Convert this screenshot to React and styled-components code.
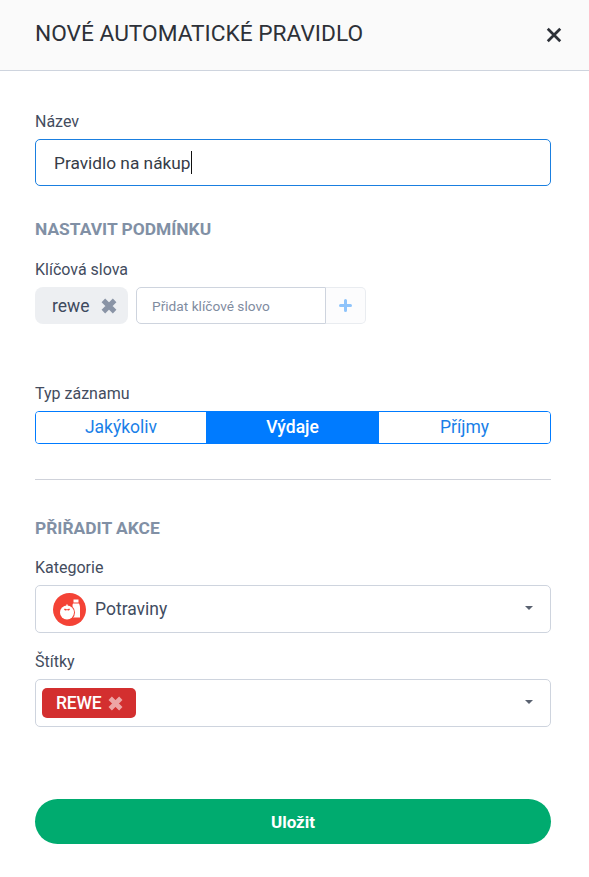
import React from "react";
import styled, { createGlobalStyle } from "styled-components";

const Global = createGlobalStyle`
  html, body { margin: 0; padding: 0; background: #fff; }
  body { font-family: Roboto, "Liberation Sans", sans-serif; color: #3e4a5e; }
  * { box-sizing: border-box; }
`;
const Modal = styled.div`width: 589px; height: 877px; background: #fff; overflow: hidden;`;
const Header = styled.header`
  height: 71px; background: #fafafa; border-bottom: 1px solid #ced4de;
  display: flex; align-items: center; justify-content: space-between;
  padding: 0 26px 2px 35px;
`;
const Title = styled.h1`margin: 0; font-size: 22.7px; font-weight: 400; color: #2d3138; line-height: 28px;`;
const Close = styled.span`display: flex; width: 20px; height: 20px; margin-top: 2px; margin-right: -1px;`;
const Body = styled.div`padding: 40px 38px 0 35px; display: flex; flex-direction: column;`;
const Label = styled.label`display: block; font-size: 16px; height: 20px; line-height: 22px; color: #434c5e;`;
const NameField = styled.div`
  height: 47px; margin-top: 8px; border: 1px solid #1a7fe0; border-radius: 5px;
  display: flex; align-items: center; padding: 0 0 0 18px; font-size: 17.3px; color: #363c47;
`;
const Caret = styled.i`display: inline-block; width: 1px; height: 23px; background: #111;`;
const Section = styled.h2`
  margin: ${p => p.$top}px 0 ${p => p.$bottom}px; font-size: 17.4px; line-height: 22px; font-weight: 700; color: #8190a5;
`;
const KeywordRow = styled.div`display: flex; margin-top: 8px; height: 37px;`;
const Keyword = styled.div`
  width: 93px; background: #edeff2; border-radius: 8px; display: flex; align-items: center;
  padding-left: 17px; font-size: 17.5px; color: #3e4a5e; gap: 11px;
`;
const KeywordInput = styled.div`
  margin-left: 8px; width: 190px; border: 1px solid #ced4de; border-radius: 5px 0 0 5px;
  display: flex; align-items: center; padding-left: 15px; font-size: 13.7px; color: #7f8c9f;
`;
const AddButton = styled.div`
  width: 40px; border: 1px solid #e9ecf0; border-left: none; border-radius: 0 5px 5px 0; background: #fcfcfd;
  display: flex; align-items: center; justify-content: center;
`;
const TypeLabel = styled(Label)`margin-top: 59px;`;
const Segmented = styled.div`
  margin-top: 8px; height: 33px; border: 1px solid #007bff; border-radius: 4px; overflow: hidden;
  display: grid; grid-template-columns: 170px 173px 1fr;
`;
const Segment = styled.div`
  display: flex; align-items: center; justify-content: center; font-size: 17.5px; padding-bottom: 1px;
  background: ${p => (p.$active ? "#007bff" : "#fff")};
  color: ${p => (p.$active ? "#fff" : "#1a7fe8")};
  font-weight: ${p => (p.$active ? 500 : 400)};
`;
const Divider = styled.hr`margin: 35px 0 0; border: 0; border-top: 1px solid #cfd2da;`;
const Select = styled.div`
  height: 48px; margin-top: 8px; border: 1px solid #ced4de; border-radius: 5px;
  display: flex; align-items: center; justify-content: space-between; padding: 0 17px 0 ${p => p.$pad}px;
`;
const SelectValue = styled.div`display: flex; align-items: center; gap: 9px; font-size: 17.5px; color: #414c60;`;
const Arrow = styled.span`
  width: 0; height: 0; margin-bottom: 2px;
  border: 4.5px solid transparent; border-top: 4.5px solid #5a6270; border-bottom: 0;
`;
const FieldLabel = styled(Label)`margin-top: ${p => p.$top}px;`;
const Tag = styled.div`
  height: 30px; width: 94px; background: #d32f2f; border-radius: 5px; color: #fff; font-size: 17.5px; font-weight: 500;
  display: flex; align-items: center; padding-left: 14px; gap: 6px; letter-spacing: -0.2px;
`;
const Save = styled.button`
  margin-top: 72px; height: 45px; width: 100%; border: 0; border-radius: 23px; background: #00ab6f; color: #fff;
  font: 700 17px Roboto, sans-serif;
`;

const XIcon = ({ size, color, weight }) => (
  <svg width={size} height={size} viewBox="0 0 16 16" aria-hidden="true">
    <path d="M3 3l10 10M13 3L3 13" stroke={color} strokeWidth={weight} strokeLinecap="butt" />
  </svg>
);
const FoodIcon = () => (
  <svg width="33" height="33" viewBox="0 0 33 33" aria-hidden="true">
    <circle cx="16.5" cy="16.5" r="16.5" fill="#f44336" />
    <path d="M20.5 6.5h5v3h-5zM20 10.5h6c.6 1.4 1 2.4 1 4V24.5h-7.5V12.5c0-.8.2-1.4.5-2z" fill="#fff" />
    <circle cx="14" cy="19.5" r="8" fill="#f44336" />
    <circle cx="14" cy="19.5" r="7" fill="#fff" />
    <path d="M11 16c1-.3 2-.2 3 .4 1-.6 2-.7 3-.4-.4 1-1.1 1.5-1.9 1.5L14 17l-1.100.5c-.8 0-1.500-.5-1.900-1.500z" fill="#f44336" />
    <path d="M13.300 11.500h1.400v4.500h-1.400z" fill="#fff" />
  </svg>
);

export default function App() {
  return (
    <Modal>
      <Global />
      <Header>
        <Title>NOVÉ AUTOMATICKÉ PRAVIDLO</Title>
        <Close><XIcon size={20} color="#2d3138" weight={2.2} /></Close>
      </Header>
      <Body>
        <Label>Název</Label>
        <NameField>Pravidlo na nákup<Caret /></NameField>
        <Section $top={32} $bottom={19}>NASTAVIT PODMÍNKU</Section>
        <Label>Klíčová slova</Label>
        <KeywordRow>
          <Keyword>rewe <XIcon size={18} color="#8a94a6" weight={4.5} /></Keyword>
          <KeywordInput>Přidat klíčové slovo</KeywordInput>
          <AddButton>
            <svg width="13" height="13" viewBox="0 0 13 13" aria-hidden="true">
              <path d="M6.5 1.5v10M1.5 6.5h10" stroke="#8fc4fb" strokeWidth="3" strokeLinecap="round" />
            </svg>
          </AddButton>
        </KeywordRow>
        <TypeLabel>Typ záznamu</TypeLabel>
        <Segmented>
          <Segment>Jakýkoliv</Segment>
          <Segment $active>Výdaje</Segment>
          <Segment>Příjmy</Segment>
        </Segmented>
        <Divider />
        <Section $top={37} $bottom={18}>PŘIŘADIT AKCE</Section>
        <Label>Kategorie</Label>
        <Select $pad={17}>
          <SelectValue><FoodIcon />Potraviny</SelectValue>
          <Arrow />
        </Select>
        <FieldLabel $top={18}>Štítky</FieldLabel>
        <Select $pad={6}>
          <Tag>REWE <XIcon size={17} color="#eda5a5" weight={4.5} /></Tag>
          <Arrow />
        </Select>
        <Save>Uložit</Save>
      </Body>
    </Modal>
  );
}
